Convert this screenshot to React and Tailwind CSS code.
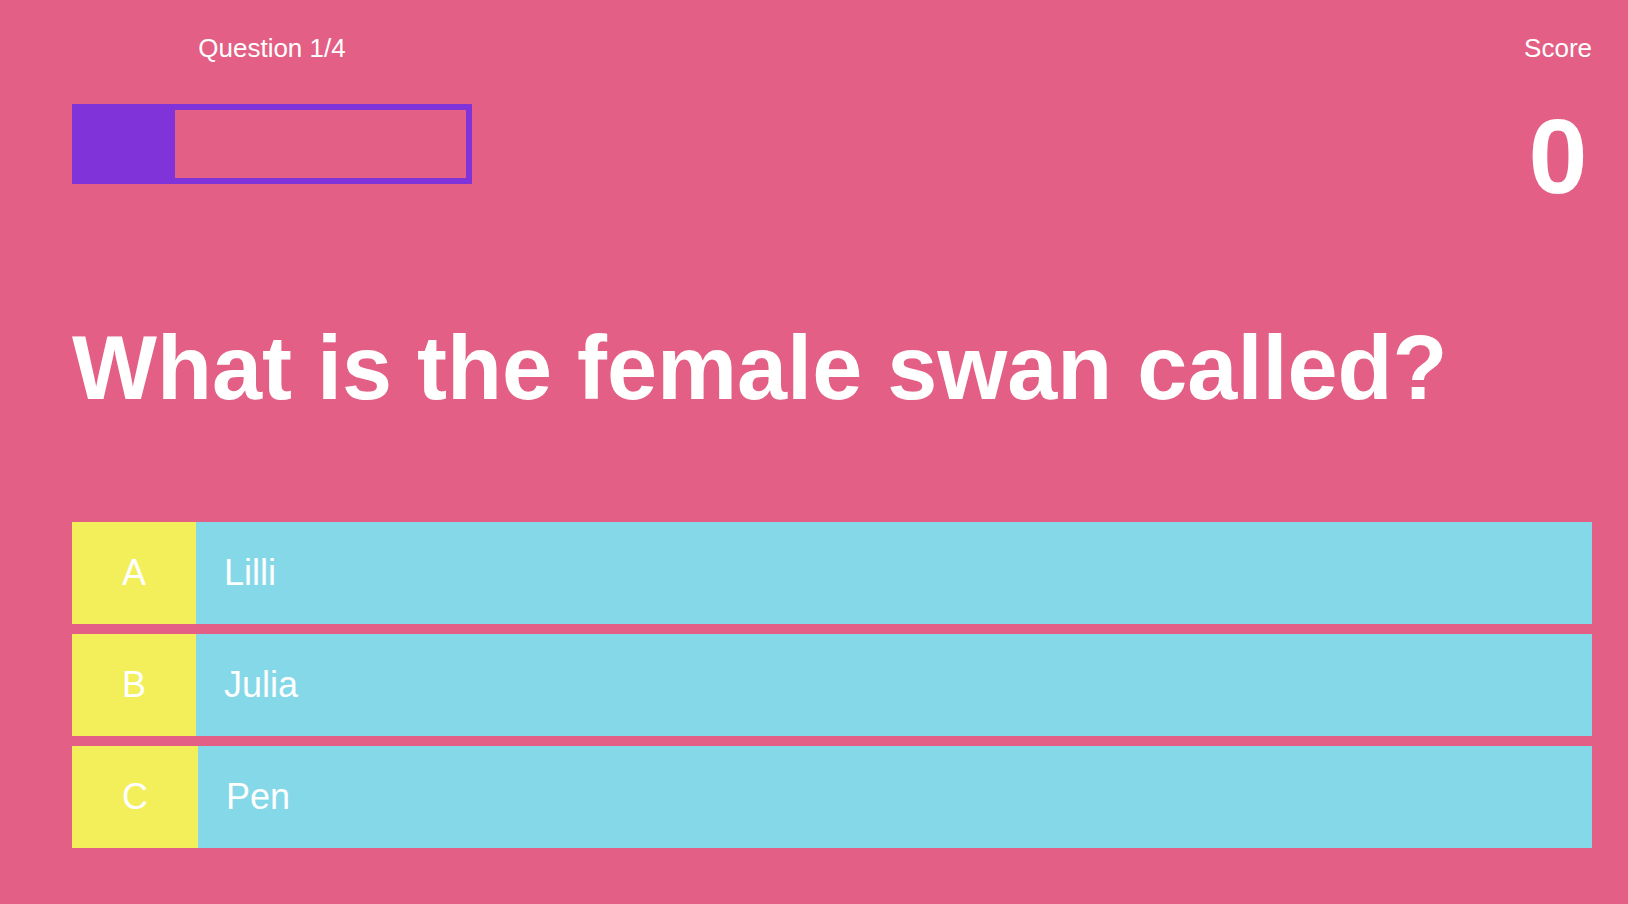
import React from 'react';

const question = {
  index: 1,
  total: 4,
  text: 'What is the female swan called?',
  answers: [
    { letter: 'A', label: 'Lilli' },
    { letter: 'B', label: 'Julia' },
    { letter: 'C', label: 'Pen' },
  ],
};

const App = () => {
  const score = 0;
  const progress = (question.index / question.total) * 100;

  return (
    <div
      className="min-h-screen bg-[#e35f85] pl-[72px] pr-[36px] text-white"
      style={{ fontFamily: '"Liberation Sans", Arial, sans-serif' }}
    >
      {/* Header */}
      <div className="flex items-start justify-between pt-[34px]">
        <div className="flex w-[400px] flex-col">
          <p className="text-center text-[26px] leading-[29px]">
            Question {question.index}/{question.total}
          </p>
          <div className="mt-[41px] h-[80px] border-[6px] border-[#8033d9]">
            <div className="h-full bg-[#8033d9]" style={{ width: `${progress}%` }} />
          </div>
        </div>
        <div className="flex flex-col items-center">
          <p className="text-[26px] leading-[29px]">Score</p>
          <p className="mt-[40px] text-[106px] font-bold leading-none">{score}</p>
        </div>
      </div>

      {/* Question */}
      <h1 className="mt-[109px] text-[90px] font-bold leading-[100px]">
        {question.text}
      </h1>

      {/* Answers */}
      <div className="mt-[104px] flex flex-col gap-[10px]">
        {question.answers.map((answer) => (
          <div key={answer.letter} className="flex h-[102px] text-[36px]">
            <div className="flex items-center bg-[#f2ef5a] px-[50px]">
              {answer.letter}
            </div>
            <div className="flex flex-1 items-center bg-[#84d8e8] pl-7">
              {answer.label}
            </div>
          </div>
        ))}
      </div>
    </div>
  );
};

export default App;
